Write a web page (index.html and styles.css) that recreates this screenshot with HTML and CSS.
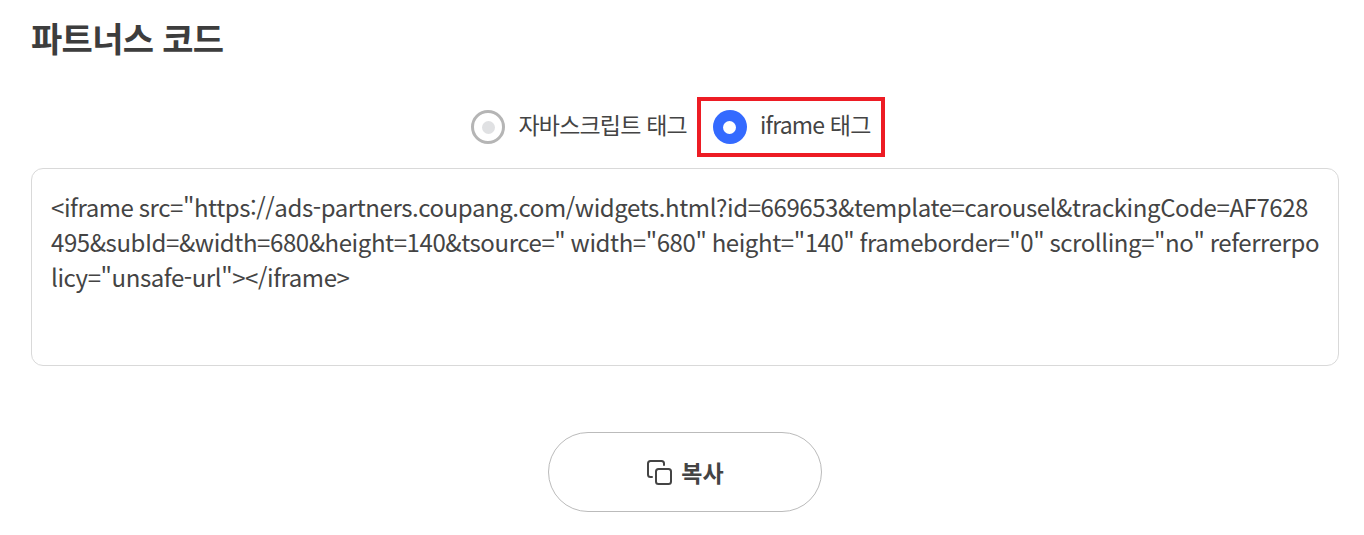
FILE: index.html
```html
<!DOCTYPE html>
<html lang="ko">
<head>
    <meta charset="UTF-8">
    <title>파트너스 코드</title>
    <link rel="stylesheet" href="styles.css">
</head>
<body>
    <div class="container">
        <h2 class="title">파트너스 코드</h2>
        <div class="radio-row">
            <label class="radio-item">
                <span class="radio radio-off"><span class="radio-dot"></span></span>
                <span class="radio-text">자바스크립트 태그</span>
            </label>
            <label class="radio-item radio-marked">
                <span class="radio radio-on"><span class="radio-dot"></span></span>
                <span class="radio-text">iframe 태그</span>
            </label>
        </div>
        <div class="code-box">&lt;iframe src="https://ads-partners.coupang.com/widgets.html?id=669653&amp;template=carousel&amp;trackingCode=AF7628495&amp;subId=&amp;width=680&amp;height=140&amp;tsource=" width="680" height="140" frameborder="0" scrolling="no" referrerpolicy="unsafe-url"&gt;&lt;/iframe&gt;</div>
        <div class="button-row">
            <button class="copy-button">
                <svg class="copy-icon" width="26" height="26" viewBox="0 0 26 26" fill="none" stroke="#444" stroke-width="2" stroke-linejoin="round" stroke-linecap="round">
                    <rect x="10" y="10" width="15" height="15" rx="2.5"></rect>
                    <path d="M18 6V4.5A2.5 2.5 0 0 0 15.5 2H4.5A2.5 2.5 0 0 0 2 4.5V15.5A2.5 2.5 0 0 0 4.5 18H6"></path>
                </svg>
                복사
            </button>
        </div>
    </div>
</body>
</html>
```

FILE: styles.css
```css
body {
    margin: 0;
    background-color: #fff;
    font-family: "Noto Sans CJK KR", "Noto Sans", sans-serif;
    color: #444;
}
.container {
    padding: 14px 25px 0 31px;
}
.title {
    margin: 0;
    font-size: 34px;
    line-height: 48px;
    font-weight: 700;
    color: #3d3d3d;
    letter-spacing: -0.7px;
}
.radio-row {
    display: flex;
    justify-content: center;
    margin-top: 35px;
    padding-right: 14px;
}
.radio-item {
    display: flex;
    align-items: center;
    gap: 13px;
    height: 60px;
    box-sizing: border-box;
    padding-right: 10px;
    font-size: 23px;
    letter-spacing: -0.8px;
    color: #444;
}
.radio-text {
    margin-bottom: 6px;
}
.radio-marked {
    border: 4px solid #ed1c24;
    padding: 0 10px 0 12px;
}
.radio {
    display: flex;
    align-items: center;
    justify-content: center;
    width: 34px;
    height: 34px;
    box-sizing: border-box;
    border-radius: 50%;
}
.radio-off {
    border: 3px solid #b5b5b5;
}
.radio-off .radio-dot {
    width: 13px;
    height: 13px;
    border-radius: 50%;
    background-color: #e0e1e3;
}
.radio-on {
    background-color: #346aff;
}
.radio-on .radio-dot {
    width: 13px;
    height: 13px;
    border-radius: 50%;
    background-color: #fff;
}
.code-box {
    margin-top: 11px;
    height: 198px;
    box-sizing: border-box;
    padding: 20px 18px 20px 19px;
    border: 1px solid #d9d9d9;
    border-radius: 12px;
    font-size: 24px;
    line-height: 35px;
    letter-spacing: -0.42px;
    word-spacing: -1px;
    color: #444;
    word-break: break-all;
}
.button-row {
    display: flex;
    justify-content: center;
    margin-top: 66px;
}
.copy-button {
    display: flex;
    align-items: center;
    justify-content: center;
    gap: 9px;
    width: 274px;
    height: 80px;
    background-color: #fff;
    border: 1px solid #bbb;
    border-radius: 40px;
    font-family: inherit;
    font-size: 23px;
    font-weight: 700;
    color: #444;
}
```
